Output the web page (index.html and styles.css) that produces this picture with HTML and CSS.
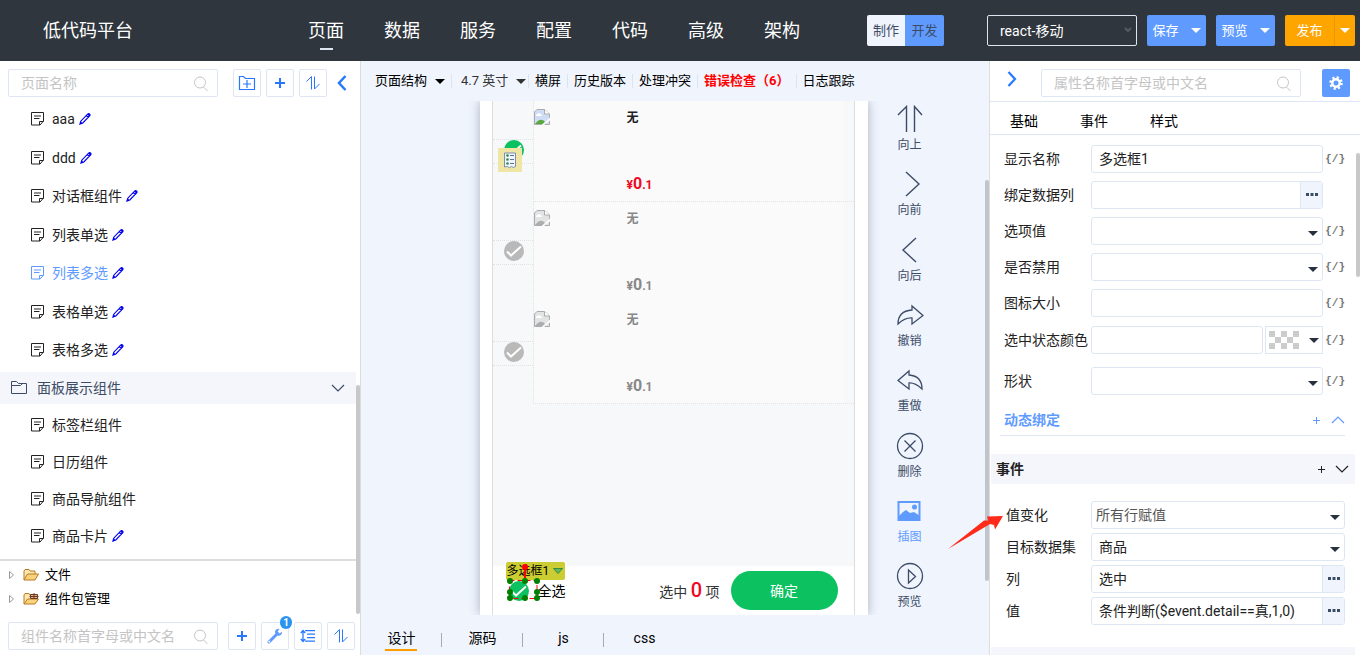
FILE: index.html
```html
<!DOCTYPE html>
<html lang="zh-CN">
<head>
<meta charset="utf-8">
<title>低代码平台</title>
<link rel="stylesheet" href="styles.css">
</head>
<body>
<svg class="defs" aria-hidden="true">
  <symbol id="doc" viewBox="0 0 14 14"><path d="M1.500.5h12v8.500l-3.500 4h-8.500zM4 4h7M4 6.500h5.500M9.500 13v-3.500h4" fill="none" stroke="currentColor"/></symbol>
  <symbol id="pen" viewBox="0 0 12 12"><path d="M1 11l.8-2.8L8.6 1.2q1.200-.9 2 0t-.2 2L3.800 10zM7.300 2.500l2 2" fill="none" stroke="#0000ee" stroke-width="1.200"/><path d="M1 11l.8-2.600 1.800 1.800zM8.200 1.400l1.600-.9 1.600 1.500-1.200 1.600z" fill="#0000ee"/></symbol>
  <symbol id="search" viewBox="0 0 16 16"><circle cx="7" cy="6.500" r="5.500" fill="none" stroke="currentColor"/><path d="M10.500 11l4 4" stroke="currentColor"/></symbol>
  <symbol id="plus" viewBox="0 0 12 12"><path d="M6 1v10M1 6h10" stroke="currentColor" stroke-width="2"/></symbol>
  <symbol id="thinplus" viewBox="0 0 8 8"><path d="M4.500 1v7M1 4.500h7" stroke="currentColor"/></symbol>
  <symbol id="sort" viewBox="0 0 14 14"><path d="M.5 5.500l5-5V13.500M8.500.5V13l5-5" fill="none" stroke="currentColor"/></symbol>
  <symbol id="down" viewBox="0 0 14 8"><path d="M1 1l6 6 6-6" fill="none" stroke="currentColor" stroke-width="1.200"/></symbol>
  <symbol id="check" viewBox="0 0 20 20"><circle cx="10" cy="10" r="10" fill="currentColor"/><path d="M3 10.500l4 4L17 5.500" fill="none" stroke="#fff" stroke-width="2"/></symbol>
  <symbol id="broken" viewBox="0 0 16 16"><path d="M.5 3L3 .5h7.500L15.500 5v10.500H.5z" fill="var(--sky)" stroke="#a9abae"/><path d="M10.500.5V5h5" fill="#fff" stroke="#a9abae"/><path d="M2 6q2-3 5-1l1 2H2z" fill="#fff"/><path d="M1 15q6-8 11-1v1z" fill="var(--hill)"/><path d="M16 8.500L7.500 16H10l6-4.500z" fill="#fafafa"/></symbol>
</svg>

<header class="top">
  <h1 class="brand">低代码平台</h1>
  <nav class="nav">
    <a href="#" class="on">页面</a><a href="#">数据</a><a href="#">服务</a><a href="#">配置</a><a href="#">代码</a><a href="#">高级</a><a href="#">架构</a>
  </nav>
  <div class="mode"><button>制作</button><button class="on">开发</button></div>
  <div class="platform"><select aria-label="平台"><option>react-移动</option></select><svg width="8" height="6" viewBox="0 0 8 6"><path d="M1 1l3 3 3-3" fill="none" stroke="#555b62" stroke-width="2"/></svg></div>
  <div class="actions">
    <button>保存<i class="tri"></i></button>
    <button>预览<i class="tri"></i></button>
    <div class="publish"><button>发布</button><button aria-label="更多"><i class="tri"></i></button></div>
  </div>
</header>

<main class="work">
  <aside class="left">
    <div class="tools pages">
      <div class="search"><input type="text" placeholder="页面名称" aria-label="页面名称"><svg width="16" height="16"><use href="#search"/></svg></div>
      <div class="btns">
        <button aria-label="新建目录"><svg width="18" height="16" viewBox="0 0 18 16"><path d="M5 14.500H1.500v-13h4l2 2h9v11H13" fill="none" stroke="currentColor" stroke-width="1.200"/><path d="M9 5v8M5 9h8M5 14.500h8" stroke="currentColor" stroke-width="1.200"/></svg></button>
        <button aria-label="新建"><svg width="12" height="12"><use href="#plus"/></svg></button>
        <button aria-label="排序"><svg width="14" height="14"><use href="#sort"/></svg></button>
      </div>
      <button class="fold" aria-label="收起"><svg width="10" height="16" viewBox="0 0 10 16"><path d="M8.500 1L2 8l6.500 7" fill="none" stroke="#2878ff" stroke-width="2.500"/></svg></button>
    </div>
    <div class="list">
      <ul class="items edited">
        <li><a href="#"><svg width="14" height="14"><use href="#doc"/></svg>aaa</a><button aria-label="编辑"><svg width="12" height="12"><use href="#pen"/></svg></button></li>
        <li><a href="#"><svg width="14" height="14"><use href="#doc"/></svg>ddd</a><button aria-label="编辑"><svg width="12" height="12"><use href="#pen"/></svg></button></li>
        <li><a href="#"><svg width="14" height="14"><use href="#doc"/></svg>对话框组件</a><button aria-label="编辑"><svg width="12" height="12"><use href="#pen"/></svg></button></li>
        <li><a href="#"><svg width="14" height="14"><use href="#doc"/></svg>列表单选</a><button aria-label="编辑"><svg width="12" height="12"><use href="#pen"/></svg></button></li>
        <li><a href="#" class="current"><svg width="14" height="14"><use href="#doc"/></svg>列表多选</a><button aria-label="编辑"><svg width="12" height="12"><use href="#pen"/></svg></button></li>
        <li><a href="#"><svg width="14" height="14"><use href="#doc"/></svg>表格单选</a><button aria-label="编辑"><svg width="12" height="12"><use href="#pen"/></svg></button></li>
        <li><a href="#"><svg width="14" height="14"><use href="#doc"/></svg>表格多选</a><button aria-label="编辑"><svg width="12" height="12"><use href="#pen"/></svg></button></li>
      </ul>
      <div class="group"><svg width="18" height="14" viewBox="0 0 18 14"><path d="M1.500 12.500V.5h5l2 2h8v10zM1.500 4.500h9l2-2" fill="none" stroke="currentColor"/></svg><span>面板展示组件</span><svg width="14" height="8"><use href="#down"/></svg></div>
      <ul class="items">
        <li><a href="#"><svg width="14" height="14"><use href="#doc"/></svg>标签栏组件</a></li>
        <li><a href="#"><svg width="14" height="14"><use href="#doc"/></svg>日历组件</a></li>
        <li><a href="#"><svg width="14" height="14"><use href="#doc"/></svg>商品导航组件</a></li>
        <li><a href="#"><svg width="14" height="14"><use href="#doc"/></svg>商品卡片</a><button aria-label="编辑"><svg width="12" height="12"><use href="#pen"/></svg></button></li>
      </ul>
    </div>
    <div class="tree">
      <div class="node"><svg width="6" height="8" viewBox="0 0 6 8"><path d="M.5.5v7l4-3.500z" fill="none" stroke="#999"/></svg><svg width="16" height="12" viewBox="0 0 16 12"><path d="M1 11V2l1-1.500h4L7 2h5v3" fill="#fbe8b0" stroke="#b87a22"/><path d="M1 11l3.500-6h11L12 11z" fill="#fbd27c" stroke="#b87a22"/></svg><span>文件</span></div>
      <div class="node"><svg width="6" height="8" viewBox="0 0 6 8"><path d="M.5.5v7l4-3.500z" fill="none" stroke="#999"/></svg><svg width="16" height="12" viewBox="0 0 16 12"><path d="M1 11V2l1-1.500h4L7 2h5v3" fill="#fbe8b0" stroke="#b87a22"/><path d="M1 11l3.500-5h11L12 11z" fill="#fbd27c" stroke="#b87a22"/><path d="M7.500 1.500h7v4h-7zM11 0v6M6.500 3.500h9" fill="#e5b08a" stroke="#6b3a22"/></svg><span>组件包管理</span></div>
    </div>
    <div class="tools comps">
      <div class="search"><input type="text" placeholder="组件名称首字母或中文名" aria-label="组件名称"><svg width="16" height="16"><use href="#search"/></svg></div>
      <div class="btns">
        <button aria-label="新建组件"><svg width="12" height="12"><use href="#plus"/></svg></button>
        <button aria-label="配置组件"><svg width="16" height="16" viewBox="0 0 16 16"><path d="M2 14l7-7" stroke="#5f9bff" stroke-width="3" stroke-linecap="round"/><path d="M12.500.8q-4-.3-4.500 3L8.500 7l3 .8q3.500-.3 3.700-4L12.500 5.500 10.700 3.600z" fill="#5f9bff"/><circle cx="2.300" cy="13.700" r=".9" fill="#fff"/></svg><b class="badge">1</b></button>
        <button aria-label="展开"><svg width="16" height="14" viewBox="0 0 16 14"><path d="M3 2v10M.8 4L3 1.500 5.200 4M.8 10L3 12.500 5.200 10M5 1.700h10M7 5.200h8M7 8.700h8M5 12.200h10" fill="none" stroke="currentColor" stroke-width="1.300"/></svg></button>
        <button aria-label="排序"><svg width="14" height="14"><use href="#sort"/></svg></button>
      </div>
    </div>
    <div class="bar bar-left"></div>
  </aside>

  <section class="center">
    <div class="toolbar">
      <button>页面结构<i class="tri"></i></button>
      <div class="size"><select aria-label="屏幕尺寸"><option>4.7 英寸</option></select><i class="tri"></i></div>
      <button>横屏</button><button>历史版本</button><button>处理冲突</button><button class="err">错误检查（6）</button><button>日志跟踪</button>
    </div>
    <div class="stage">
      <div class="phone">
        <div class="screen">
          <div class="row first"><div class="pick"><svg class="ok" width="20" height="20"><use href="#check"/></svg>
            <svg class="tag" width="24" height="24" viewBox="0 0 24 24"><path d="M0 0h24v24H0z" fill="#efe6a6"/><path d="M6.500 5h11v13.500l-2 1-2-1-2 1.200-2-1.200-3 .5z" fill="#eef5ff" stroke="#7d8fae"/><path d="M12 7.500h4M12 11.500h4M12 15.500h4" stroke="#6b6f96"/><circle cx="9.500" cy="7.500" r="1.300" fill="#2e8b45"/><circle cx="9.500" cy="11.500" r="1.300" fill="#2e8b45"/><circle cx="9.500" cy="15.500" r="1.300" fill="#2e8b45"/></svg></div>
            <div class="card"><svg class="img" width="16" height="16"><use href="#broken"/></svg><div class="info"><b>无</b><strong>¥<big>0</big>.1</strong></div></div></div>
          <div class="row gray"><div class="pick"><svg width="20" height="20"><use href="#check"/></svg></div>
            <div class="card"><svg class="img" width="16" height="16"><use href="#broken"/></svg><div class="info"><b>无</b><strong>¥<big>0</big>.1</strong></div></div></div>
          <div class="row gray"><div class="pick"><svg width="20" height="20"><use href="#check"/></svg></div>
            <div class="card"><svg class="img" width="16" height="16"><use href="#broken"/></svg><div class="info"><b>无</b><strong>¥<big>0</big>.1</strong></div></div></div>
          <div class="submit">
            <label class="all"><span class="chosen"><svg class="ok" width="20" height="20"><use href="#check"/></svg>
              <span class="name">多选框1<svg width="10" height="6" viewBox="0 0 10 6"><path d="M.5.5h9L5 5.500z" fill="#6fb55f" stroke="#2f8f3f"/></svg></span>
              <svg class="grip" width="36" height="40" viewBox="0 0 36 40"><path d="M4.500 18.500h27.500v18H4.500z" fill="none" stroke="#f00" stroke-dasharray="5 3"/><path d="M20 5v11" stroke="#f00" stroke-width="2"/><circle cx="20" cy="5" r="3" fill="#f00"/><g fill="#008000"><circle cx="5" cy="19" r="3"/><circle cx="20" cy="19" r="3"/><circle cx="32" cy="19" r="3"/><circle cx="5" cy="30" r="3"/><circle cx="32" cy="30" r="3"/><circle cx="5" cy="36" r="3"/><circle cx="20" cy="36" r="3"/><circle cx="32" cy="36" r="3"/></g></svg></span>全选</label>
            <p class="count">选中 <b>0</b> 项</p>
            <button>确定</button>
          </div>
        </div>
      </div>
      <div class="ops">
        <button><svg width="28" height="28" viewBox="0 0 28 28"><path d="M2 10l8.500-8.500V27M18.500 27V1.500L26 10" fill="none" stroke="currentColor" stroke-width="1.400"/></svg>向上</button>
        <button><svg width="28" height="28" viewBox="0 0 28 28"><path d="M10 2l13 12-13 12" fill="none" stroke="currentColor" stroke-width="1.400"/></svg>向前</button>
        <button><svg width="28" height="28" viewBox="0 0 28 28"><path d="M20 2L7 14l13 12" fill="none" stroke="currentColor" stroke-width="1.400"/></svg>向后</button>
        <button><svg width="28" height="28" viewBox="0 0 28 28"><path d="M2 23q0-13 14-14V5l11 9.500L16 23v-6q-7-.5-14 6z" fill="none" stroke="currentColor" stroke-width="1.300"/></svg>撤销</button>
        <button><svg width="28" height="28" viewBox="0 0 28 28"><path d="M26 23q0-13-13-14V5L2 14.500 13 23v-6q6-.5 13 6z" fill="none" stroke="currentColor" stroke-width="1.300"/></svg>重做</button>
        <button><svg width="28" height="28" viewBox="0 0 28 28"><circle cx="14" cy="14" r="12.500" fill="none" stroke="currentColor" stroke-width="1.300"/><path d="M8.500 8.500l11 11M19.500 8.500l-11 11" stroke="currentColor" stroke-width="1.300"/></svg>删除</button>
        <button class="on"><svg width="28" height="28" viewBox="0 0 28 28"><path d="M2.500 5h21v18h-21z" fill="none" stroke="currentColor" stroke-width="2"/><path d="M3 19l4-4 3-2 4 3 4-1 6 4v5H3z" fill="currentColor"/><circle cx="18.500" cy="10" r="2.500" fill="currentColor"/></svg>插图</button>
        <button><svg width="28" height="28" viewBox="0 0 28 28"><circle cx="14" cy="14" r="12.500" fill="none" stroke="currentColor" stroke-width="1.300"/><path d="M12.500 8v13l7-6.500z" fill="none" stroke="currentColor" stroke-width="1.300"/></svg>预览</button>
      </div>
    </div>
    <div class="views"><button class="on">设计</button><button>源码</button><button>js</button><button>css</button></div>
    <div class="bar bar-center"></div>
  </section>

  <aside class="right">
    <div class="head">
      <button class="fold" aria-label="展开"><svg width="10" height="16" viewBox="0 0 10 16"><path d="M1.500 1L8 8l-6.500 7" fill="none" stroke="#2878ff" stroke-width="2.200"/></svg></button>
      <div class="search"><input type="text" placeholder="属性名称首字母或中文名" aria-label="属性名称"><svg width="16" height="16"><use href="#search"/></svg></div>
      <button class="gear" aria-label="设置"><svg width="14" height="14" viewBox="0 0 14 14"><circle cx="7" cy="7" r="5.500" fill="none" stroke="#fff" stroke-width="2.500" stroke-dasharray="2.160"/><circle cx="7" cy="7" r="3.700" fill="none" stroke="#fff" stroke-width="2.400"/></svg></button>
    </div>
    <div class="tabs"><button>基础</button><button>事件</button><button>样式</button></div>
    <div class="props">
      <div class="field"><label for="p1">显示名称</label><div class="box"><input id="p1" type="text" value="多选框1"></div><button class="fx">{/}</button></div>
      <div class="field"><label for="p2">绑定数据列</label><div class="box"><input id="p2" type="text"><button class="more" aria-label="选择"><svg width="12" height="4" viewBox="0 0 12 4"><path d="M0 0h3v3H0zM4.500 0h3v3h-3zM9 0h3v3H9z" fill="#3d4c66"/></svg></button></div></div>
      <div class="field"><label for="p3">选项值</label><div class="box"><select id="p3"></select><i class="tri"></i></div><button class="fx">{/}</button></div>
      <div class="field"><label for="p4">是否禁用</label><div class="box"><select id="p4"></select><i class="tri"></i></div><button class="fx">{/}</button></div>
      <div class="field"><label for="p5">图标大小</label><div class="box"><input id="p5" type="text"></div><button class="fx">{/}</button></div>
      <div class="field color"><label for="p6">选中状态颜色</label><div class="pair"><div class="box"><input id="p6" type="text"></div><button class="swatch" aria-label="选择颜色"><span class="checker"></span><i class="tri"></i></button></div><button class="fx">{/}</button></div>
      <div class="field"><label for="p7">形状</label><div class="box"><select id="p7"></select><i class="tri"></i></div><button class="fx">{/}</button></div>
      <div class="bind"><b>动态绑定</b><svg width="8" height="8"><use href="#thinplus"/></svg><svg width="14" height="8" viewBox="0 0 14 8"><path d="M1 7l6-6 6 6" fill="none" stroke="currentColor" stroke-width="1.200"/></svg></div>
    </div>
    <div class="band"><b>事件</b><svg width="8" height="8"><use href="#thinplus"/></svg><svg width="14" height="8"><use href="#down"/></svg></div>
    <div class="events">
      <div class="field"><label for="e1">值变化</label><div class="box soft"><select id="e1"><option>所有行赋值</option></select><i class="tri"></i></div></div>
      <div class="field"><label for="e2">目标数据集</label><div class="box"><select id="e2"><option>商品</option></select><i class="tri"></i></div></div>
      <div class="field"><label for="e3">列</label><div class="box"><input id="e3" type="text" value="选中"><button class="more" aria-label="选择"><svg width="12" height="4" viewBox="0 0 12 4"><path d="M0 0h3v3H0zM4.500 0h3v3h-3zM9 0h3v3H9z" fill="#3d4c66"/></svg></button></div></div>
      <div class="field"><label for="e4">值</label><div class="box"><input id="e4" type="text" value="条件判断($event.detail==真,1,0)"><button class="more" aria-label="选择"><svg width="12" height="4" viewBox="0 0 12 4"><path d="M0 0h3v3H0zM4.500 0h3v3h-3zM9 0h3v3H9z" fill="#3d4c66"/></svg></button></div></div>
    </div>
    <div class="band"></div>
    <div class="bar bar-right"></div>
    <svg class="arrow" width="58" height="36" viewBox="0 0 58 36"><path d="M1 35L37 6.500 41 6.500 40 2.500 56 2 48 15.500 47 11 43 10z" fill="#ff2a1a"/></svg>
  </aside>
</main>
</body>
</html>
```

FILE: styles.css
```css
* { box-sizing: border-box; }
body { margin: 0; height: 100vh; display: flex; flex-direction: column; overflow: hidden; background: #fff; color: #222; font: 14px/20px Roboto, "Noto Sans CJK SC", sans-serif; }
button, input, select { font: inherit; color: inherit; margin: 0; padding: 0; border: 0; background: none; border-radius: 0; outline: 0; }
select { appearance: none; }
a { color: inherit; text-decoration: none; }
ul { list-style: none; margin: 0; padding: 0; }
svg { display: block; flex: none; }
.defs { position: absolute; width: 0; height: 0; }
.tri { flex: none; border: 5px solid transparent; border-top-color: currentColor; border-bottom: 0; }

.top { flex: none; display: flex; align-items: center; height: 61px; padding: 0 5px 0 43px; background: #2f363e; color: #fff; }
.brand { margin: 0; width: 265px; font-size: 18px; font-weight: 400; }
.nav { display: flex; gap: 40px; font-size: 18px; flex: 1; }
.nav a { position: relative; line-height: 24px; }
.nav .on::after { content: ""; position: absolute; left: 12px; top: 29px; width: 13px; height: 2px; background: #dfe4f3; }
.mode { display: flex; margin-right: 43px; font-size: 13px; color: #3d4c66; }
.mode button { width: 38px; height: 31px; background: #eff4fd; border-radius: 2px 0 0 2px; }
.mode .on { width: 39px; background: #5f9bff; border-radius: 0 2px 2px 0; }
.platform { position: relative; width: 150px; height: 31px; margin-right: 10px; }
.platform select { width: 100%; height: 100%; padding: 0 12px; border: 1px solid #dfe4f3; border-radius: 2px; }
.platform svg { position: absolute; right: 5px; top: 12px; }
.actions { display: flex; gap: 10px; font-size: 13px; }
.actions > button { display: flex; align-items: center; justify-content: center; gap: 12px; width: 59px; height: 31px; background: #5f9bff; border-radius: 2px; }
.publish { display: flex; }
.publish button { display: flex; align-items: center; justify-content: center; width: 49px; height: 31px; background: #ffa500; border-radius: 2px 0 0 2px; }
.publish button + button { width: 21px; border-left: 1px solid #e99600; border-radius: 0 2px 2px 0; }

.work { flex: 1; min-height: 0; display: grid; grid-template-columns: 360px 1fr 370px; }
.left, .center, .right { position: relative; display: flex; flex-direction: column; min-width: 0; min-height: 0; }
.bar { position: absolute; width: 4px; background: #c8c8c8; border-radius: 2px; }
.bar-left { right: 0; top: 324px; height: 229px; }
.bar-center { right: 1px; top: 119px; height: 401px; background: #c2c4cb; }
.bar-right { right: 0; top: 92px; height: 124px; }

.search { position: relative; flex: 1; height: 28px; }
.search input { width: 100%; height: 100%; padding: 0 12px; border: 1px solid #dfe6f3; border-radius: 2px; }
.search input::placeholder { color: #c4c4c4; opacity: 1; }
.search svg { position: absolute; right: 9px; top: 7px; color: #c4c4c4; }
.tools { flex: none; display: flex; align-items: center; }
.pages { padding: 8px 13px 3px 8px; }
.pages .search { margin-right: 15px; }
.comps { padding: 9px 5px 5px 8px; }
.comps .search { margin-right: 10px; }
.btns { display: flex; gap: 5px; color: #2878ff; }
.btns button { position: relative; display: grid; place-items: center; width: 28px; height: 28px; border: 1px solid #dfe6f3; border-radius: 2px; }
.fold { margin-left: 10px; }
.badge { position: absolute; right: -4px; top: -7px; width: 12px; height: 13px; border-radius: 6px; background: #2b93f0; color: #fff; font-size: 10px; line-height: 13px; text-align: center; }

.list { flex: 1; min-height: 0; overflow: hidden; }
.items li { display: flex; align-items: center; gap: 4px; height: 37px; padding-left: 30px; }
.edited li { height: 38px; }
.edited li:nth-child(even) { height: 39px; }
.items a { display: flex; align-items: center; gap: 8px; }
.items .current { color: #5f9bff; }
.group { display: flex; align-items: center; height: 32px; margin: 3px 4px 2px 0; padding: 0 11px 0 10px; gap: 9px; background: #f5f6fb; color: #3d4c66; }
.group span { flex: 1; }
.tree { flex: none; margin-right: 4px; padding: 2px 0; border-top: 2px solid #ddd; color: #000; font-size: 13px; }
.node { display: flex; align-items: center; height: 24px; padding-left: 9px; }
.node svg + svg { margin: 0 6px 0 8px; }

.center { background: #eff4fd; border-left: 1px solid #ddd; }
.toolbar { flex: none; display: flex; align-items: center; height: 40px; padding-left: 8px; color: #000; font-size: 13px; }
.toolbar > * { display: flex; align-items: center; height: 14px; padding: 0 6px; border-right: 1px solid #dde3ef; }
.toolbar > button { white-space: nowrap; }
.toolbar > button:last-child { border: 0; }
.toolbar > button .tri { margin-left: 8px; }
.toolbar .size { width: 77px; padding: 0 2px 0 9px; color: #333; }
.size select { flex: 1; }
.toolbar .err { color: #f00; font-weight: 700; }
.stage { flex: 1; min-height: 0; display: grid; grid-template-columns: 1fr 388px 1fr; grid-template-rows: minmax(0, 1fr); padding-right: 4px; overflow: hidden; }
.phone { grid-column: 2; padding: 0 13px 0 12px; background: #fff; box-shadow: 0 0 10px #aab0bd; min-height: 0; }
.screen { height: 100%; display: flex; flex-direction: column; border: solid #ddd; border-width: 0 1px; background: #f7f8fa; }
.row { display: grid; grid-template-columns: 40px 1fr; height: 101px; }
.pick { position: relative; height: 25px; margin-top: 38px; padding: 0 0 0 11px; border: dotted #e2e2e2; border-width: 1px 0; color: #b9b9b9; }
.ok { color: #0bc160; }
.tag { position: absolute; left: 5px; top: 8px; }
.card { display: flex; padding: 8px 0 7px; border-left: 1px dotted #e2e2e2; border-bottom: 1px dotted #e2e2e2; background: linear-gradient(90deg, #fafafa 310px, #f7f8fa 310px); --sky: #cfdcf5; --hill: #58a83c; }
.row:nth-child(2) .card { border-bottom-color: transparent; }
.gray .card { color: #888; --sky: #e2e4e4; --hill: #adadad; }
.img { margin-right: 77px; }
.info { display: flex; flex-direction: column; justify-content: space-between; font-size: 12px; line-height: 18px; }
.info strong { color: #ee0a24; }
.gray strong { color: #888; }
.info big { font-size: 16px; }
.submit { display: flex; align-items: center; margin-top: auto; padding: 5px 16px; background: #fff; color: #333; }
.all { flex: 1; display: flex; align-items: center; color: #000; }
.chosen { position: relative; margin-right: 9px; }
.name { position: absolute; left: -3px; top: -19px; display: flex; align-items: center; gap: 4px; width: 59px; height: 18px; padding-left: 1px; border-radius: 2px; background: #cc3; color: #000; font-size: 12px; white-space: nowrap; }
.grip { position: absolute; left: -4px; top: -19px; }
.count { margin: 0 11px 0 0; }
.count b { color: #ee0a24; font-size: 20px; font-weight: 500; }
.submit button { width: 107px; height: 39px; border-radius: 20px; background: #0bc160; color: #fff; }
.ops { padding: 4px 0 0 28px; }
.ops button { display: flex; flex-direction: column; align-items: center; gap: 4px; margin-bottom: 17px; color: #3d4c66; font-size: 12px; line-height: 16px; }
.ops button:nth-child(3n+2) { margin-bottom: 18px; }
.ops .on { color: #5f9bff; }
.views { flex: none; display: flex; height: 40px; color: #000; }
.views button { position: relative; width: 81px; height: 46px; }
.views button + button::before { content: ""; position: absolute; left: -1px; top: 18px; height: 14px; border-left: 1px solid #aaa; }
.views .on::after { content: ""; position: absolute; left: 24px; top: 34px; width: 32px; height: 2px; background: #ff9d00; }

.right { border-left: 1px solid #ddd; margin-left: -1px; }
.head { flex: none; display: flex; align-items: center; height: 41px; padding: 0 10px 0 17px; border-bottom: 1px solid #dfe6f3; }
.head .fold { margin: 0 24px 4px 0; }
.head .search { margin: 4px 21px 0 0; }
.gear { display: grid; place-items: center; width: 28px; height: 28px; margin-top: 4px; border-radius: 2px; background: #5f9bff; }
.tabs { flex: none; display: flex; gap: 42px; height: 33px; padding: 6px 20px 0; border-bottom: 1px solid #dfe6f3; color: #000; }
.props { flex: none; display: flex; flex-direction: column; gap: 8px; padding: 10px 15px 0 14px; }
.field { display: grid; grid-template-columns: 87px 1fr 22px; align-items: center; height: 28px; }
.field label { white-space: nowrap; }
.box { position: relative; display: flex; height: 28px; min-width: 0; border: 1px solid #dfe6f3; border-radius: 3px; }
.box input, .box select { flex: 1; min-width: 0; width: 100%; padding: 0 7px; }
.box .tri { position: absolute; right: 4px; top: 13px; color: #26303f; }
.soft select { padding: 0 4px; color: #555; }
.more { display: grid; place-items: center; width: 22px; background: #eff4fd; border-left: 1px solid #dfe6f3; }
.fx { color: #777; font: 700 11px/16px "Liberation Mono", monospace; justify-self: end; }
.color { margin: 1px 0 5px; }
.pair { display: grid; grid-template-columns: 1fr 58px; gap: 2px; }
.swatch { display: flex; align-items: center; justify-content: space-between; padding: 0 3px; border: 1px solid #dfe6f3; color: #26303f; }
.checker { width: 30px; height: 18px; background: conic-gradient(#fff 25%, #ccc 0 50%, #fff 0 75%, #ccc 0) 0 0 / 12px 12px; }
.bind { display: flex; align-items: center; gap: 11px; height: 33px; margin: 0 0 0 -4px; padding: 2px 0 0 4px; border-bottom: 1px solid #dfe6f3; color: #5f9bff; }
.bind b, .band b { flex: 1; font-weight: 700; }
.band { flex: none; display: flex; align-items: center; gap: 10px; height: 30px; margin: 18px 5px 0 1px; padding: 0 6px 0 5px; background: #f5f6fb; }
.events { flex: none; display: flex; flex-direction: column; gap: 4px; padding: 17px 15px 4px 16px; }
.events .field { grid-template-columns: 85px 1fr; }
.arrow { position: absolute; left: -43px; top: 453px; }
```
